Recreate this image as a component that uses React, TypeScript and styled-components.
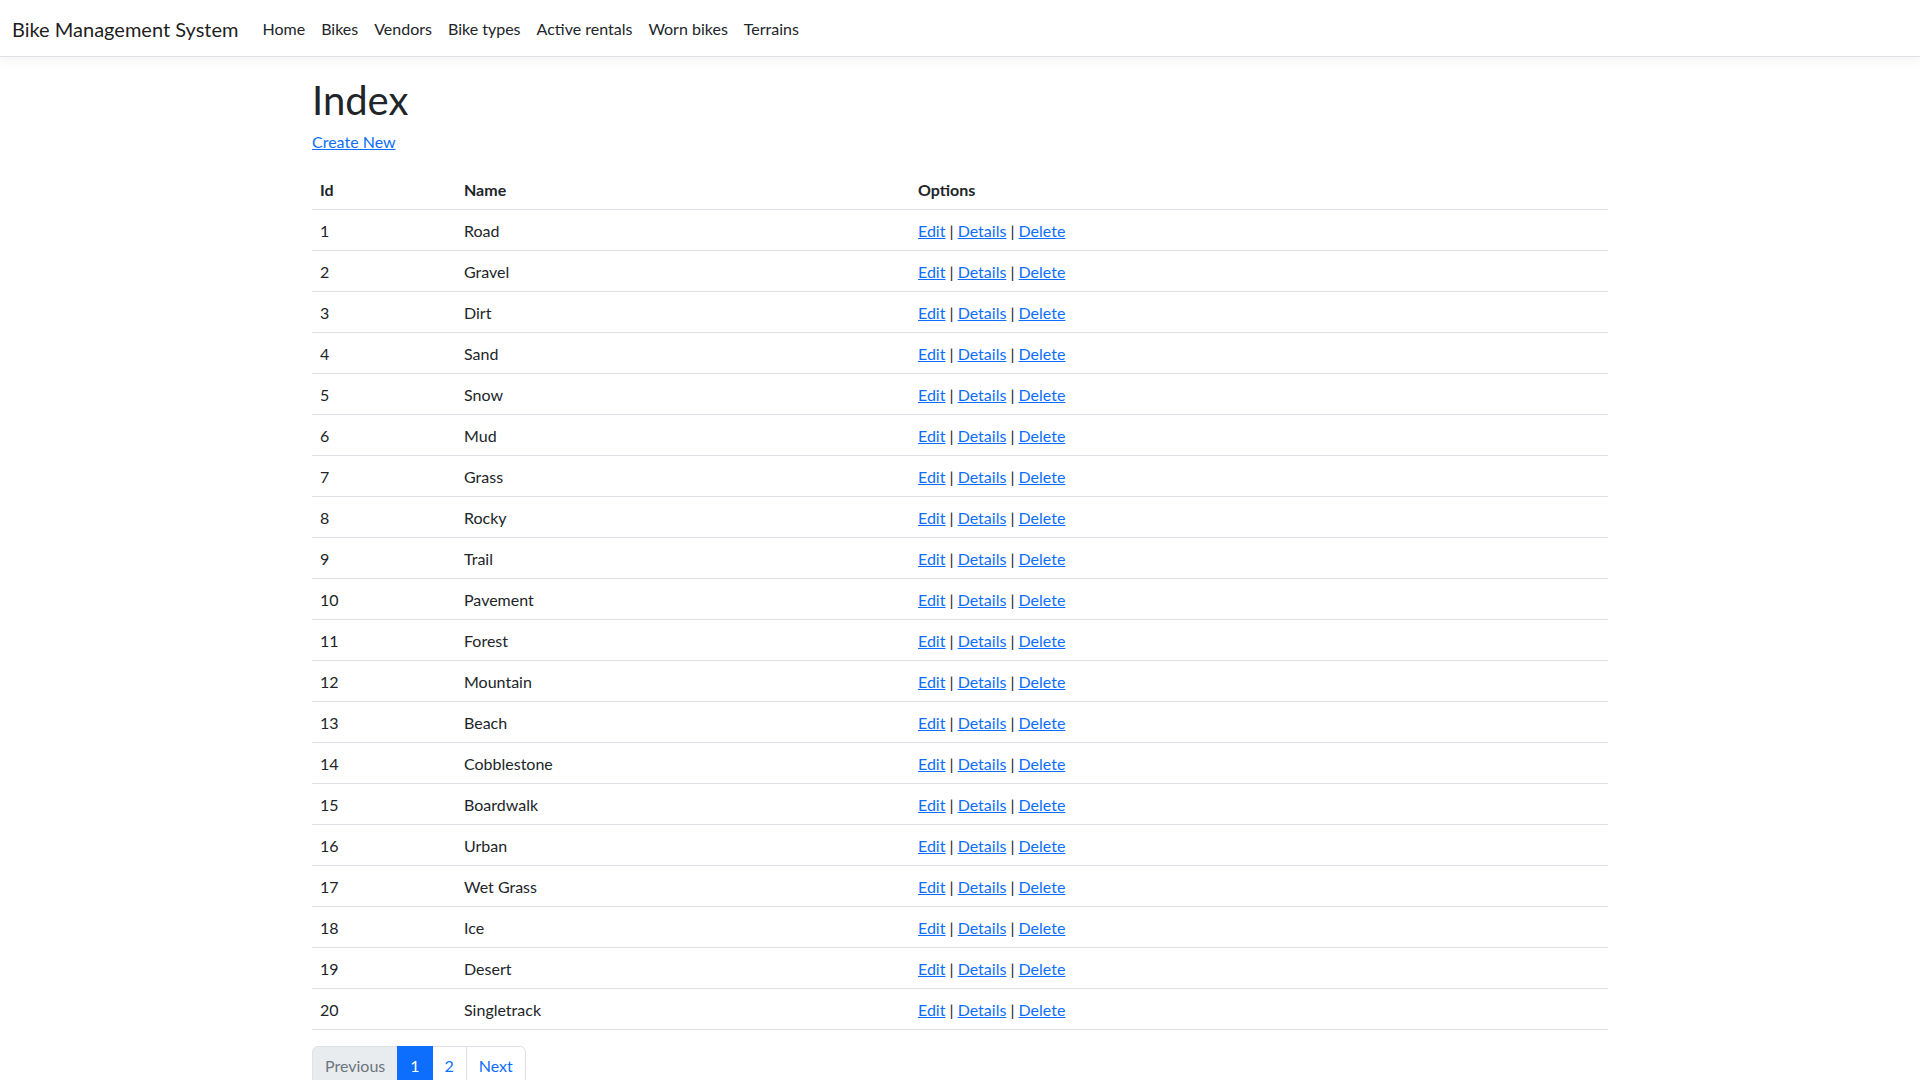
import React from "react";
import styled, { createGlobalStyle, css } from "styled-components";

const GlobalStyle = createGlobalStyle`
  *, *::before, *::after { box-sizing: border-box; }
  html { font-size: 16px; }
  body {
    margin: 0;
    font-family: "Segoe UI", Lato, "Liberation Sans", Arial, sans-serif;
    font-size: 1rem;
    line-height: 1.5;
    color: #212529;
    background: #fff;
  }
`;

const Header = styled.header``;

const Navbar = styled.nav`
  display: flex;
  align-items: center;
  padding: 8px 12px;
  background: #fff;
  border-bottom: 1px solid #dee2e6;
  box-shadow: 0 4px 12px rgba(0, 0, 0, 0.05);
  margin-bottom: 16px;
`;

const Brand = styled.a`
  font-size: 20px;
  line-height: 30px;
  padding: 6px 0 4px;
  margin-right: 16px;
  color: rgba(0, 0, 0, 0.9);
  text-decoration: none;
  white-space: nowrap;
`;

const NavList = styled.ul`
  display: flex;
  list-style: none;
  margin: 0;
  padding: 0;
`;

const NavLink = styled.a`
  display: block;
  padding: 9px 8px 7px;
  color: #212529;
  text-decoration: none;
  line-height: 24px;
`;

const Container = styled.main`
  width: 1320px;
  margin: 0 auto;
  padding: 0 12px 16px;
`;

const Title = styled.h1`
  margin: 0 0 5px;
  padding-top: 3px;
  font-size: 40px;
  font-weight: 400;
  line-height: 1.2;
`;

const Para = styled.p`
  margin: 0 0 16px;
  padding-top: 1px;
  line-height: 23px;
`;

const Link = styled.a`
  color: #0d6efd;
  text-decoration: underline;
`;

const Table = styled.table`
  width: 100%;
  table-layout: fixed;
  border-collapse: collapse;
  margin-bottom: 16px;
  color: #212529;
`;

const Th = styled.th<{ $w?: number }>`
  text-align: left;
  font-weight: 700;
  padding: 9px 8px 7px;
  line-height: 24px;
  border-bottom: 1px solid #dee2e6;
  vertical-align: bottom;
  ${(p) => p.$w && css`width: ${p.$w}px;`}
`;

const Td = styled.td`
  padding: 9px 8px 7px;
  border-bottom: 1px solid #dee2e6;
  line-height: 24px;
`;

const Pagination = styled.ul`
  display: flex;
  list-style: none;
  margin: 0;
  padding: 0;
`;

const PageLink = styled.a<{ $state?: "disabled" | "active" | "normal"; $first?: boolean; $last?: boolean }>`
  display: block;
  padding: 7px 12px 5px;
  line-height: 24px;
  border: 1px solid #dee2e6;
  margin-left: -1px;
  text-decoration: none;
  color: #0d6efd;
  background: #fff;
  ${(p) => p.$first && css`margin-left: 0; border-radius: 6px 0 0 6px;`}
  ${(p) => p.$last && css`border-radius: 0 6px 6px 0;`}
  ${(p) =>
    p.$state === "disabled" &&
    css`
      color: #6c757d;
      background: #e9ecef;
    `}
  ${(p) =>
    p.$state === "active" &&
    css`
      color: #fff;
      background: #0d6efd;
      border-color: #0d6efd;
      position: relative;
      z-index: 1;
    `}
`;

const terrains = [
  "Road", "Gravel", "Dirt", "Sand", "Snow", "Mud", "Grass", "Rocky", "Trail", "Pavement",
  "Forest", "Mountain", "Beach", "Cobblestone", "Boardwalk", "Urban", "Wet Grass", "Ice", "Desert", "Singletrack",
];

const navItems = ["Home", "Bikes", "Vendors", "Bike types", "Active rentals", "Worn bikes", "Terrains"];

export default function App() {
  return (
    <>
      <GlobalStyle />
      <Header>
        <Navbar>
          <Brand href="#">Bike Management System</Brand>
          <NavList>
            {navItems.map((n) => (
              <li key={n}>
                <NavLink href="#">{n}</NavLink>
              </li>
            ))}
          </NavList>
        </Navbar>
      </Header>
      <Container>
        <Title>Index</Title>
        <Para>
          <Link href="#">Create New</Link>
        </Para>
        <Table>
          <thead>
            <tr>
              <Th $w={144}>Id</Th>
              <Th $w={454}>Name</Th>
              <Th>Options</Th>
            </tr>
          </thead>
          <tbody>
            {terrains.map((t, i) => (
              <tr key={t}>
                <Td>{i + 1}</Td>
                <Td>{t}</Td>
                <Td>
                  <Link href="#">Edit</Link> | <Link href="#">Details</Link> | <Link href="#">Delete</Link>
                </Td>
              </tr>
            ))}
          </tbody>
        </Table>
        <Pagination>
          <li><PageLink $state="disabled" $first>Previous</PageLink></li>
          <li><PageLink $state="active" href="#">1</PageLink></li>
          <li><PageLink href="#">2</PageLink></li>
          <li><PageLink href="#" $last>Next</PageLink></li>
        </Pagination>
      </Container>
    </>
  );
}
